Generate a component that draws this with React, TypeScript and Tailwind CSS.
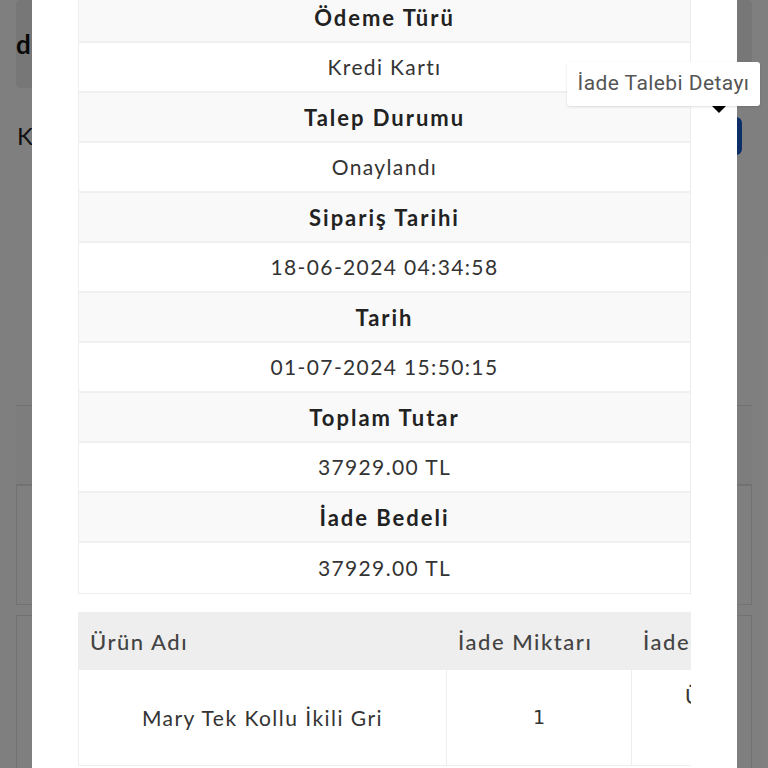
import React from "react";

const rows: [string, string][] = [
  ["Ödeme Türü", "Kredi Kartı"],
  ["Talep Durumu", "Onaylandı"],
  ["Sipariş Tarihi", "18-06-2024 04:34:58"],
  ["Tarih", "01-07-2024 15:50:15"],
  ["Toplam Tutar", "37929.00 TL"],
  ["İade Bedeli", "37929.00 TL"],
];

export default function App() {
  return (
    <div className="relative h-[768px] w-[768px] overflow-hidden bg-white font-['Lato',sans-serif]">
      {/* page behind the dialog */}
      <div className="flex flex-col px-[16px]">
        <div className="flex h-[88px] items-center rounded bg-[#eeeeee] text-[26px] font-bold tracking-[0.1em] text-[#111]">
          detaylar
        </div>
        <div className="flex h-[96px] items-center justify-between">
          <span className="pl-[1px] text-[24px] tracking-[0.1em] text-[#222]">Kapat</span>
          <span className="mr-[10px] h-[38px] w-[60px] rounded-md bg-[#1a5fd0]" />
        </div>
        <div className="mt-[221px] h-[80px] border-y border-[#e2e2e2] bg-[#fafafa]" />
        <div className="h-[120px] border border-[#e4e4e4]" />
        <div className="mt-[10px] h-[200px] border border-[#e4e4e4]" />
      </div>

      {/* overlay */}
      <div className="absolute inset-0 bg-black/50" />

      {/* dialog */}
      <div className="absolute left-[32px] top-0 h-[768px] w-[705px] overflow-hidden bg-white px-[46px]">
        <div className="-mt-[8px] border border-[#eeeeee]">
          {rows.map(([label, value]) => (
            <React.Fragment key={label}>
              <div className="flex h-[50px] items-center justify-center border-b-2 border-[#f0f0f0] bg-[#f9f9f9] text-[22px] font-bold tracking-[0.09em] text-[#222]">
                {label}
              </div>
              <div className="flex h-[50px] items-center justify-center border-b-2 border-[#f0f0f0] bg-white text-[21px] tracking-[0.065em] text-[#333] last:border-b-0">
                {value}
              </div>
            </React.Fragment>
          ))}
        </div>

        <div className="mt-[18px] overflow-hidden">
          <div className="grid w-[850px] grid-cols-[368px_185px_297px]">
            <div className="flex h-[58px] items-center bg-[#eeeeee] pl-[12px] text-[22px] font-medium tracking-[0.07em] text-[#444]">
              Ürün Adı
            </div>
            <div className="flex h-[58px] items-center bg-[#eeeeee] pl-[12px] text-[22px] font-medium tracking-[0.07em] text-[#444]">
              İade Miktarı
            </div>
            <div className="flex h-[58px] items-center bg-[#eeeeee] pl-[12px] text-[22px] font-medium tracking-[0.07em] text-[#444]">
              İade Nedeni
            </div>
            <div className="flex h-[96px] items-center justify-center border-b border-l border-[#eeeeee] text-[21px] tracking-[0.07em] text-[#333]">
              Mary Tek Kollu İkili Gri
            </div>
            <div className="flex h-[96px] items-center justify-center border-b border-l border-[#eeeeee] font-['DejaVu_Sans',sans-serif] text-[19px] text-[#333]">
              1
            </div>
            <div className="flex h-[96px] flex-col items-center justify-center border-b border-l border-[#eeeeee] text-center text-[21px] leading-[22px] tracking-[0.06em] text-[#333]">
              <span>Ürün açıklamadaki</span>
              <span>özelliklere</span>
              <span>uygun değil</span>
            </div>
          </div>
        </div>
      </div>

      {/* tooltip */}
      <div className="absolute left-[567px] top-[62px] flex h-[44px] w-[193px] items-center justify-center rounded-[3px] bg-white font-['Roboto',sans-serif] text-[21px] tracking-[0.02em] text-[#555] shadow-sm">
        İade Talebi Detayı
      </div>
      <div className="absolute left-[712px] top-[106px] h-0 w-0 border-x-[7px] border-t-[7px] border-x-transparent border-t-black" />
    </div>
  );
}
